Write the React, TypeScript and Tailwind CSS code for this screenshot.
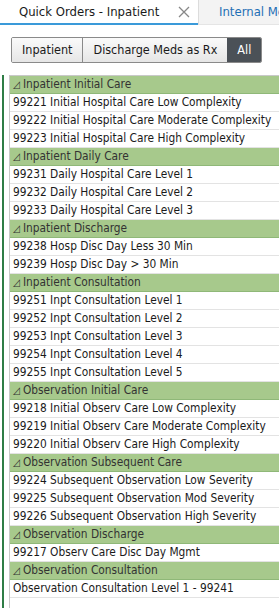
import React from 'react';

type Group = { title: string; items: string[] };

const groups: Group[] = [
  {
    title: 'Inpatient Initial Care',
    items: [
      '99221 Initial Hospital Care Low Complexity',
      '99222 Initial Hospital Care Moderate Complexity',
      '99223 Initial Hospital Care High Complexity',
    ],
  },
  {
    title: 'Inpatient Daily Care',
    items: ['99231 Daily Hospital Care Level 1', '99232 Daily Hospital Care Level 2', '99233 Daily Hospital Care Level 3'],
  },
  {
    title: 'Inpatient Discharge',
    items: ['99238 Hosp Disc Day Less 30 Min', '99239 Hosp Disc Day > 30 Min'],
  },
  {
    title: 'Inpatient Consultation',
    items: [
      '99251 Inpt Consultation Level 1',
      '99252 Inpt Consultation Level 2',
      '99253 Inpt Consultation Level 3',
      '99254 Inpt Consultation Level 4',
      '99255 Inpt Consultation Level 5',
    ],
  },
  {
    title: 'Observation Initial Care',
    items: [
      '99218 Initial Observ Care Low Complexity',
      '99219 Initial Observ Care Moderate Complexity',
      '99220 Initial Observ Care High Complexity',
    ],
  },
  {
    title: 'Observation Subsequent Care',
    items: [
      '99224 Subsequent Observation Low Severity',
      '99225 Subsequent Observation Mod Severity',
      '99226 Subsequent Observation High Severity',
    ],
  },
  {
    title: 'Observation Discharge',
    items: ['99217 Observ Care Disc Day Mgmt'],
  },
  {
    title: 'Observation Consultation',
    items: ['Observation Consultation Level 1 - 99241'],
  },
];

const App = () => {
  return (
    <div
      className="w-[279px] h-[608px] bg-white overflow-hidden flex flex-col"
      style={{ fontFamily: "'DejaVu Sans Condensed', 'DejaVu Sans', sans-serif" }}
    >
      {/* tabs */}
      <div className="flex h-[25px] shrink-0">
        <div className="w-[198px] shrink-0 flex items-center justify-between pl-[19px] pr-[8px] border-b-2 border-[#3a9ad9] text-[13px] text-[#1a1a1a]">
          <span>Quick Orders - Inpatient</span>
          <svg width="12" height="12" viewBox="0 0 12 12" className="text-[#888]">
            <path d="M1 1 L11 11 M11 1 L1 11" stroke="currentColor" strokeWidth="1.3" />
          </svg>
        </div>
        <div className="flex-1 min-w-0 bg-[#f3f3f3] border-l border-[#dcdcdc] border-b border-b-[#e5e5e5] flex items-center pl-[20px] text-[13px] text-[#1f6fb5] whitespace-nowrap overflow-hidden">
          <span className="shrink-0">Internal Medicine</span>
        </div>
      </div>

      {/* filter buttons */}
      <div className="flex pl-[11px] pt-[12px] pb-[12px] shrink-0">
        <div className="flex h-[26px] border border-[#8a8a8a] rounded-[2px] overflow-hidden text-[12.5px]">
          <button className="px-[10px] bg-gradient-to-b from-[#fafafa] to-[#e6e6e6] text-[#1a1a1a]">Inpatient</button>
          <button className="px-[10px] border-l border-[#8a8a8a] bg-gradient-to-b from-[#fafafa] to-[#e6e6e6] text-[#1a1a1a]">
            Discharge Meds as Rx
          </button>
          <button className="px-[10px] bg-[#4b5157] text-white">All</button>
        </div>
      </div>

      {/* list */}
      <div className="flex flex-1 min-h-0">
        <div className="w-[2px] ml-[2px] bg-[#2f7d46] shrink-0" />
        <div className="w-[5px] shrink-0" />
        <div className="flex-1 border-l border-t border-[#c9c9c9] text-[11.8px] text-[#1a1a1a]">
          {groups.map((g) => (
            <div key={g.title}>
              <div className="h-[18px] flex items-center pl-[3px] bg-[#a7c98c] border-b border-[#8fb878] text-[#333] whitespace-nowrap">
                <span className="text-[10px] mr-[3px]">◿</span>
                {g.title}
              </div>
              {g.items.map((it) => (
                <div key={it} className="h-[18px] flex items-center pl-[3px] border-b border-[#e3e3e3] whitespace-nowrap">
                  {it}
                </div>
              ))}
            </div>
          ))}
        </div>
      </div>
    </div>
  );
};

export default App;
